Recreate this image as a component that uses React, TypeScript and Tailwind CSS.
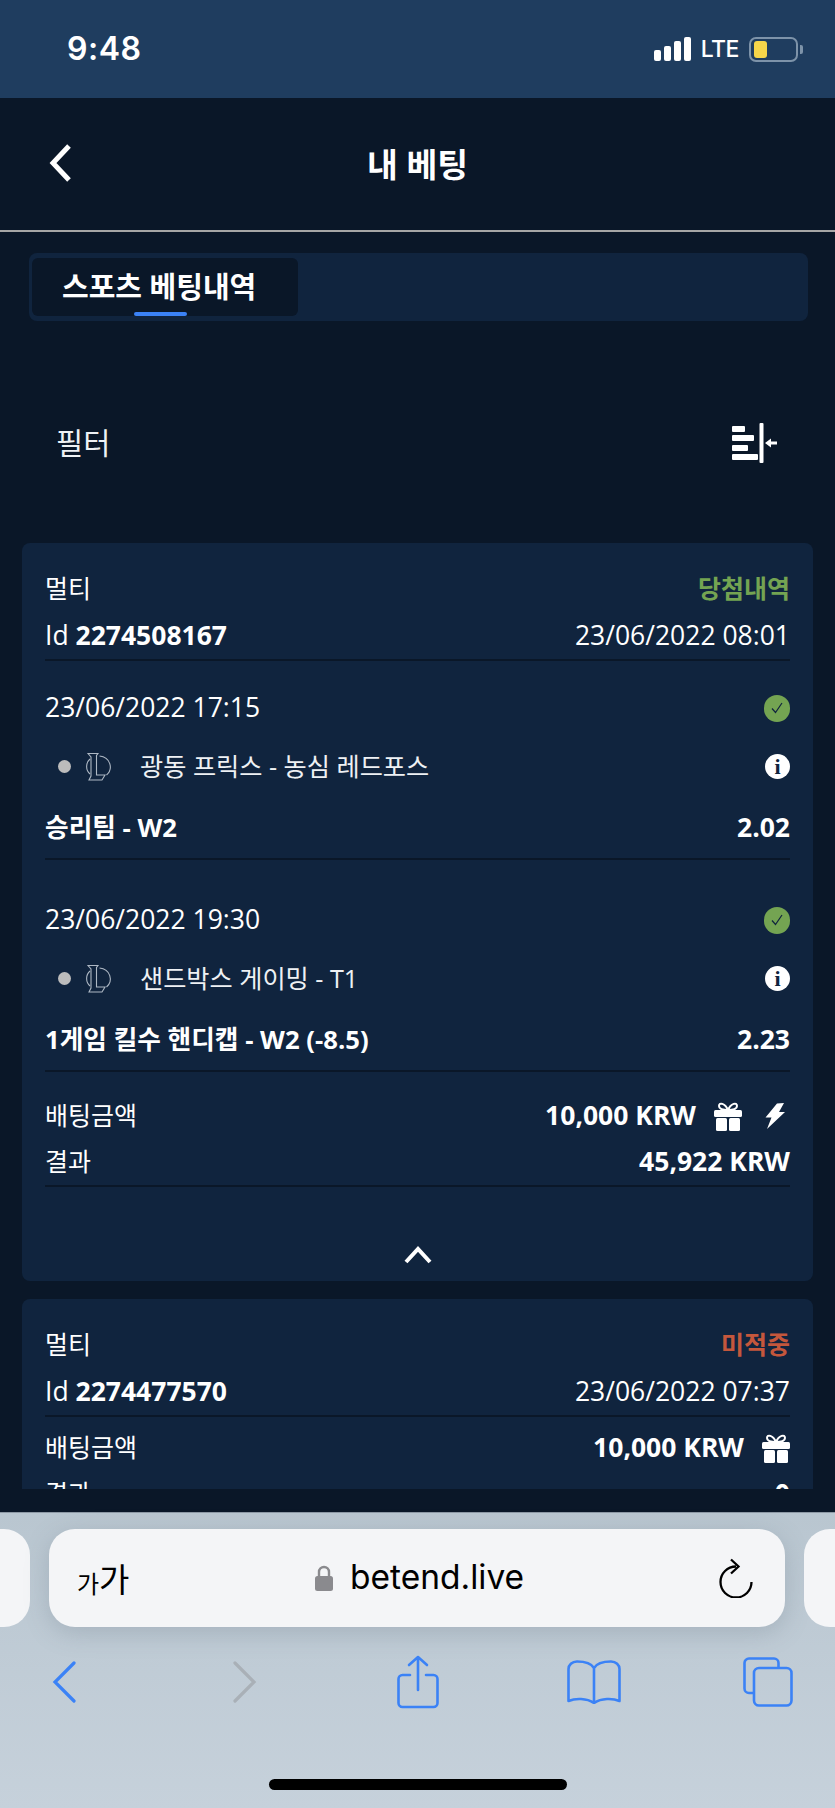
const fontStack = "font-['Open_Sans','Noto_Sans_CJK_KR',sans-serif]";

function LolIcon() {
  return (
    <svg width="28" height="28" viewBox="0 0 28 28" fill="none" stroke="#aeb8c4" strokeWidth="1.1" className="shrink-0">
      <path d="M3 0.500h10l-1.500 2V22H20l-3 5H4l2-4V4z" />
      <path d="M5 6C0.500 10 0.500 17 5 21" />
      <path d="M14.500 3c11 1 14 13 7 19" />
    </svg>
  );
}

function CheckBadge() {
  return (
    <span className="flex h-[27px] w-[26px] items-center justify-center rounded-full bg-[#74a452]">
      <svg width="14" height="14" viewBox="0 0 14 14" fill="none" stroke="#10243e" strokeWidth="1.2">
        <path d="M2 7.500l3.500 4L12 2" />
      </svg>
    </span>
  );
}

function InfoBadge() {
  return (
    <span className="flex h-[25px] w-[25px] items-center justify-center rounded-full bg-white">
      <span className="font-['Liberation_Serif',serif] text-[22px] leading-none font-bold text-[#10243e]">i</span>
    </span>
  );
}

function GiftIcon() {
  return (
    <svg width="28" height="29" viewBox="0 0 28 29" fill="#ffffff" className="shrink-0">
      <path d="M14 8C11 1 5 0 5 4c0 3 5 4 9 4zM14 8c3-7 9-8 9-4 0 3-5 4-9 4z" fill="none" stroke="#ffffff" strokeWidth="2" />
      <rect x="0" y="8" width="28" height="7" rx="1.500" />
      <rect x="2" y="16" width="11" height="13" rx="1.500" />
      <rect x="15" y="16" width="11" height="13" rx="1.500" />
    </svg>
  );
}

function BoltIcon() {
  return (
    <svg width="20" height="28" viewBox="0 0 20 28" fill="#ffffff" className="shrink-0">
      <path d="M12 1.500L19 1l-5 9h6L2 27l4.500-11.500H0.500z" />
    </svg>
  );
}

function CardHeader({ status, statusColor, id, placedAt }: { status: string; statusColor: string; id: string; placedAt: string }) {
  return (
    <>
      <div className="flex h-[48px] items-center justify-between">
        <span>멀티</span>
        <span className={`font-semibold ${statusColor}`}>{status}</span>
      </div>
      <div className="flex h-[48px] items-center justify-between border-b-2 border-[#0a1728] text-[26.5px]">
        <span>
          Id <b className="font-bold">{id}</b>
        </span>
        <span>{placedAt}</span>
      </div>
    </>
  );
}

function BetLeg({ date, teams, market, odds, first }: { date: string; teams: string; market: string; odds: string; first?: boolean }) {
  return (
    <div className={`border-b-2 border-[#0a1728] pb-[7px] ${first ? "pt-[27px]" : "pt-[40px]"}`}>
      <div className="flex h-[40px] items-center justify-between text-[26.5px]">
        <span>{date}</span>
        <CheckBadge />
      </div>
      <div className="flex h-[77px] items-center">
        <span className="ml-[13px] h-[13px] w-[13px] rounded-full bg-[#bcbcbc]" />
        <span className="ml-[14px]">
          <LolIcon />
        </span>
        <span className="ml-[27px] flex-1 text-[25.2px] text-[#eef1f4]">{teams}</span>
        <InfoBadge />
      </div>
      <div className="flex h-[46px] items-center justify-between text-[25.7px] font-bold">
        <span>{market}</span>
        <span className="text-[26.5px]">{odds}</span>
      </div>
    </div>
  );
}

function StakeRow({ amount, bolt }: { amount: string; bolt?: boolean }) {
  return (
    <div className="flex h-[46px] items-center justify-between">
      <span>배팅금액</span>
      <span className="flex items-center text-[26.5px] font-bold">
        {amount}
        <span className="ml-[18px]">
          <GiftIcon />
        </span>
        {bolt && (
          <span className="mr-[5px] ml-[23px]">
            <BoltIcon />
          </span>
        )}
      </span>
    </div>
  );
}

export default function App() {
  return (
    <div className={`flex h-[1808px] w-[835px] flex-col overflow-hidden bg-[#0a1728] text-white ${fontStack}`}>
      {/* phone status bar */}
      <div className="flex h-[98px] shrink-0 items-center justify-between bg-[#1f3d5f] pr-[32px] pl-[67px]">
        <span className="font-['Inter',sans-serif] text-[32px] font-semibold tracking-[0.5px]">9:48</span>
        <div className="flex items-center">
          <div className="flex items-end gap-[3px]">
            <span className="h-[11px] w-[7px] rounded-[2px] bg-white" />
            <span className="h-[15px] w-[7px] rounded-[2px] bg-white" />
            <span className="h-[20px] w-[7px] rounded-[2px] bg-white" />
            <span className="h-[24px] w-[7px] rounded-[2px] bg-white" />
          </div>
          <span className="ml-[10px] font-['Inter',sans-serif] text-[23px] leading-none font-medium tracking-[-0.5px]">LTE</span>
          <div className="ml-[10px] flex h-[25px] w-[49px] items-center rounded-[7px] border-2 border-[#7d93a9] px-[3px]">
            <span className="h-[17px] w-[13px] rounded-[3px] bg-[#f6d64a]" />
          </div>
          <span className="ml-[2px] h-[9px] w-[3px] rounded-r-[2px] bg-[#7d93a9]" />
        </div>
      </div>

      {/* page header */}
      <div className="flex h-[134px] shrink-0 items-center border-b-2 border-[#a6a6a6]">
        <svg width="24" height="38" viewBox="0 0 24 38" fill="none" stroke="#ffffff" strokeWidth="5" className="mb-[3px] ml-[49px] shrink-0">
          <path d="M20 2L4 19l16 17" />
        </svg>
        <span className="ml-[294px] text-[33.5px] font-bold">내 베팅</span>
      </div>

      {/* tabs */}
      <div className="mt-[21px] mr-[27px] ml-[29px] flex h-[68px] shrink-0 rounded-[8px] bg-[#10243e] pt-[5px] pl-[3px]">
        <div className="relative flex h-[58px] w-[266px] items-center rounded-[6px] bg-[#0a1728] pl-[30px] text-[29px] font-bold">
          스포츠 베팅내역
          <span className="absolute bottom-0 left-[102px] h-[4px] w-[53px] rounded-[2px] bg-[#3b82f6]" />
        </div>
      </div>

      {/* scrolling content */}
      <div className="h-[1168px] shrink-0 overflow-hidden text-[25px]">
        <div className="flex h-[222px] items-center justify-between pt-[22px] pr-[58px] pl-[56px]">
          <span className="text-[29.5px] text-[#eef1f4]">필터</span>
          <svg width="46" height="42" viewBox="0 0 46 42" fill="#ffffff" className="shrink-0">
            <rect x="1" y="4" width="13" height="6" rx="1" />
            <rect x="1" y="13" width="22" height="6" rx="1" />
            <rect x="1" y="23" width="16" height="6" rx="1" />
            <rect x="1" y="32" width="26" height="6" rx="1" />
            <rect x="28.5" y="1" width="4" height="40" rx="1" />
            <path d="M34 21l6-4.500v3h6v3h-6v3z" />
          </svg>
        </div>

        <div className="mx-[22px] rounded-[8px] bg-[#10243e] px-[23px] pt-[22px]">
          <CardHeader status="당첨내역" statusColor="text-[#74a452]" id="2274508167" placedAt="23/06/2022 08:01" />
          <BetLeg first date="23/06/2022 17:15" teams="광동 프릭스 - 농심 레드포스" market="승리팀 - W2" odds="2.02" />
          <BetLeg date="23/06/2022 19:30" teams="샌드박스 게이밍 - T1" market="1게임 킬수 핸디캡 - W2 (-8.5)" odds="2.23" />
          <div className="mt-[21px]">
            <StakeRow amount="10,000 KRW" bolt />
            <div className="flex h-[48px] items-center justify-between border-b-2 border-[#0a1728]">
              <span>결과</span>
              <span className="text-[26.5px] font-bold">45,922 KRW</span>
            </div>
          </div>
          <div className="flex h-[94px] justify-center pt-[59px]">
            <svg width="28" height="18" viewBox="0 0 28 18" fill="none" stroke="#ffffff" strokeWidth="4">
              <path d="M2 16L14 3l12 13" />
            </svg>
          </div>
        </div>

        <div className="mx-[22px] mt-[18px] rounded-[8px] bg-[#10243e] px-[23px] pt-[22px]">
          <CardHeader status="미적중" statusColor="text-[#c4573c]" id="2274477570" placedAt="23/06/2022 07:37" />
          <div className="mt-[8px]">
            <StakeRow amount="10,000 KRW" />
            <div className="flex h-[46px] items-center justify-between">
              <span>결과</span>
              <span className="text-[26.5px] font-bold">0</span>
            </div>
          </div>
        </div>
      </div>

      <div className="h-[23px] shrink-0" />

      {/* safari chrome */}
      <div className="flex min-h-0 flex-1 flex-col border-t border-[#8d99a5] bg-gradient-to-b from-[#b9c6d0] to-[#c6d1db]">
        <div className="mt-[16px] flex h-[98px] shrink-0 items-stretch justify-between">
          <div className="w-[30px] rounded-r-[26px] bg-[#f4f5f7]" />
          <div className="flex w-[736px] items-center rounded-[26px] bg-[#f4f5f7] pr-[32px] pl-[28px] text-black shadow-[0_6px_24px_rgba(100,115,130,0.28)]">
            <span className="flex w-[238px] items-end font-['Noto_Sans_CJK_KR',sans-serif] leading-none">
              <span className="text-[24px]">가</span>
              <span className="text-[33px]">가</span>
            </span>
            <svg width="18" height="26" viewBox="0 0 18 26" className="shrink-0">
              <path d="M4 12V7a5 5 0 0 1 10 0v5" fill="none" stroke="#8a8a8e" strokeWidth="2.4" />
              <rect x="0" y="11" width="18" height="15" rx="2.5" fill="#8a8a8e" />
            </svg>
            <span className="ml-[17px] flex-1 font-['Inter',sans-serif] text-[33.5px] leading-none">betend.live</span>
            <svg width="34" height="40" viewBox="0 0 34 40" fill="none" stroke="#000000" strokeWidth="2.3" className="shrink-0">
              <path d="M17 8.500A15.500 15.500 0 1 0 32.500 24" />
              <path d="M12 1.500l7.500 7-7.500 7" />
            </svg>
          </div>
          <div className="w-[31px] rounded-l-[26px] bg-[#f4f5f7]" />
        </div>

        <div className="mt-[28px] flex h-[54px] shrink-0 items-center text-[#3b82f6]">
          <svg width="24" height="42" viewBox="0 0 24 42" fill="none" stroke="currentColor" strokeWidth="3.2" strokeLinecap="round" className="ml-[52px] shrink-0">
            <path d="M22 2L3 21l19 19" />
          </svg>
          <svg width="24" height="42" viewBox="0 0 24 42" fill="none" stroke="#a9b0b7" strokeWidth="3.2" strokeLinecap="round" className="ml-[157px] shrink-0">
            <path d="M2 2l19 19L2 40" />
          </svg>
          <svg width="42" height="54" viewBox="0 0 42 54" fill="none" stroke="currentColor" strokeWidth="2.6" strokeLinecap="round" strokeLinejoin="round" className="ml-[140px] shrink-0">
            <path d="M13 20H5.500a4 4 0 0 0-4 4v24a4 4 0 0 0 4 4h31a4 4 0 0 0 4-4V24a4 4 0 0 0-4-4H29" />
            <path d="M21 35V2M12 10l9-8 9 8" />
          </svg>
          <svg width="54" height="44" viewBox="0 0 54 44" fill="none" stroke="currentColor" strokeWidth="2.6" strokeLinejoin="round" className="ml-[128px] shrink-0">
            <path d="M27 8C24 3 17 1.500 10 1.500 5 1.500 1.500 5 1.500 9v32c7-3 18-3 25.500 2 7.500-5 18.500-5 25.500-2V9c0-4-3.500-7.500-8.500-7.500C37 1.500 30 3 27 8zM27 8v35" />
          </svg>
          <svg width="50" height="50" viewBox="0 0 50 50" fill="none" stroke="currentColor" strokeWidth="2.6" className="ml-[122px] shrink-0">
            <path d="M11 36H6a4.500 4.500 0 0 1-4.500-4.500V6A4.500 4.500 0 0 1 6 1.500h25a4.500 4.500 0 0 1 4.500 4.500v5" />
            <rect x="11" y="11" width="37.500" height="37.500" rx="5" />
          </svg>
        </div>

        <div className="mx-auto mt-[70px] h-[11px] w-[298px] rounded-full bg-black" />
      </div>
    </div>
  );
}
